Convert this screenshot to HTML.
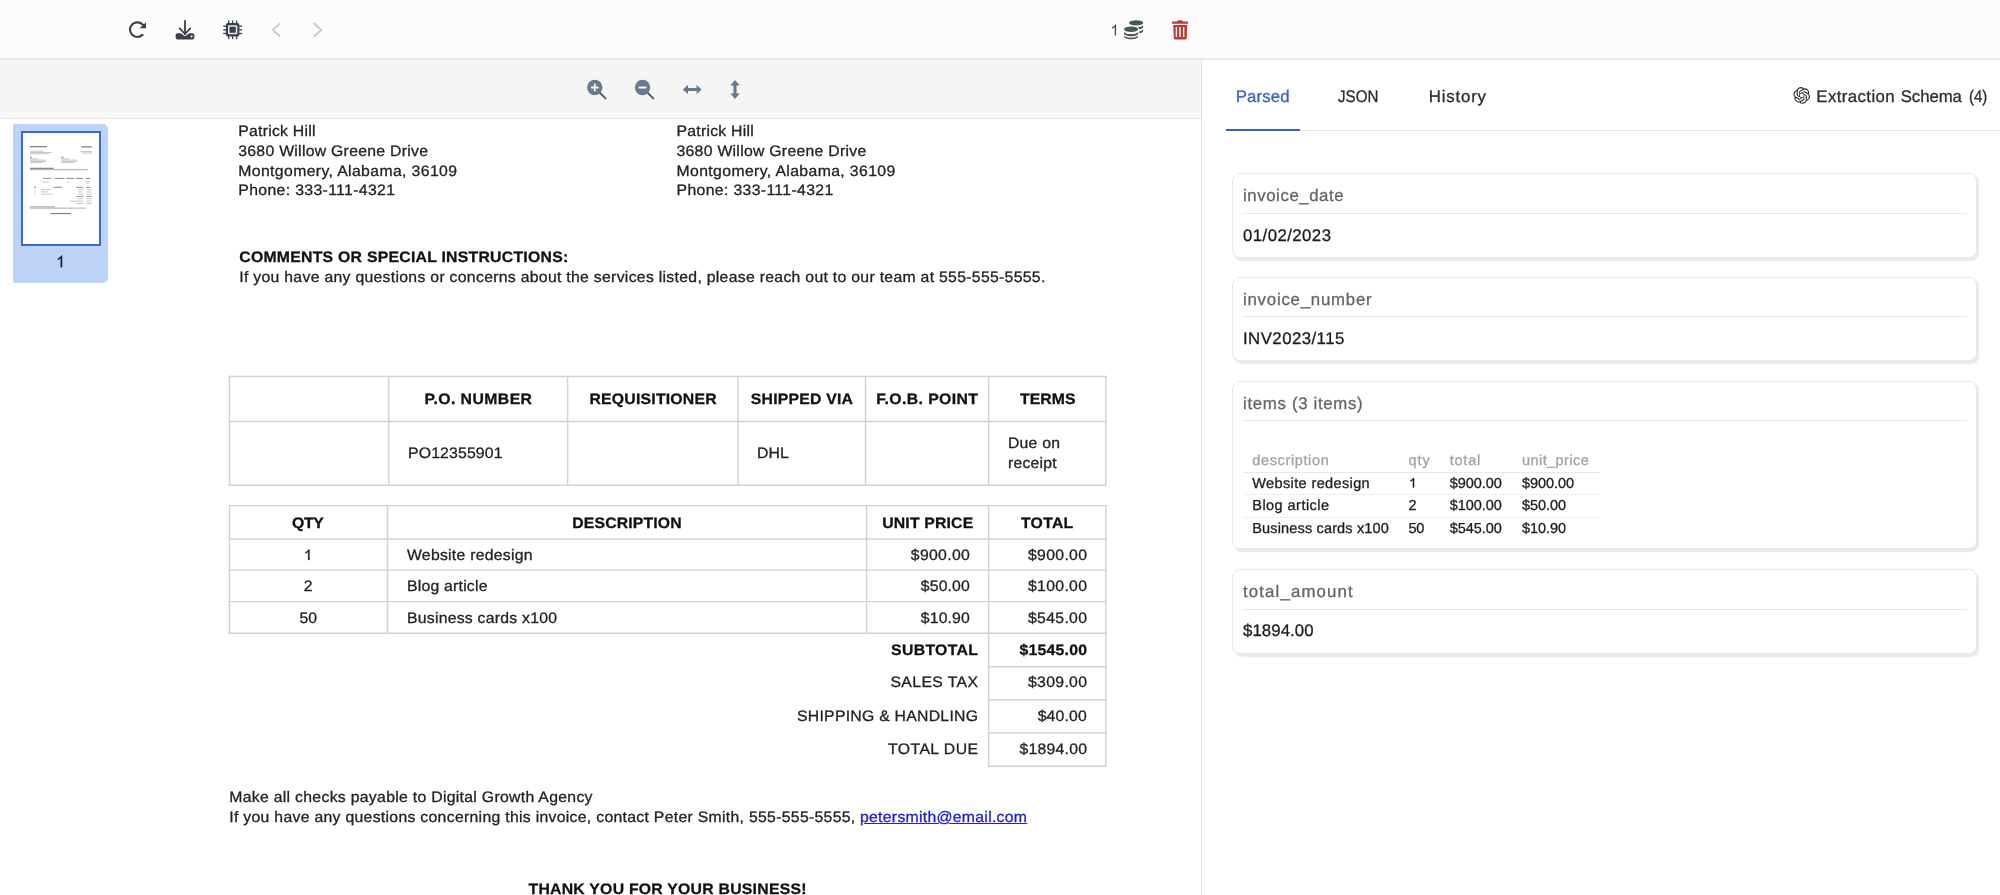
<!DOCTYPE html>
<html><head><meta charset="utf-8"><title>Document Parser</title>
<style>
html,body{margin:0;padding:0;}
body{width:2000px;height:895px;overflow:hidden;position:relative;background:#fff;font-family:"Liberation Sans",sans-serif;}
.t{-webkit-text-stroke:0.3px;text-rendering:geometricPrecision;position:absolute;white-space:pre;line-height:20px;height:20px;font-family:"Liberation Sans",sans-serif;}
.b{position:absolute;box-sizing:border-box;}
svg{position:absolute;overflow:visible;}
.card{position:absolute;box-sizing:border-box;background:#fff;border:1px solid #e9e9e9;border-radius:8px;box-shadow:2px 2.5px 1px rgba(0,0,0,0.085);}
.hl{position:absolute;height:1px;background:#e4e4e4;}
.vl{position:absolute;width:1px;background:#ccc;}
.tl{position:absolute;background:#cfcfcf;}
#txt{position:absolute;left:0;top:0;width:2000px;height:895px;will-change:transform;}

</style></head>
<body>
<!-- top bar -->
<div class="b" style="left:0;top:0;width:2000px;height:60px;background:#fcfcfc;border-bottom:2px solid #ebebeb;"></div>
<!-- grey viewer toolbar -->
<div class="b" style="left:0;top:60px;width:1201px;height:59px;background:#f5f5f5;border-bottom:1px solid #e3e3e3;"></div>
<div class="b" style="left:0;top:113px;width:1201px;height:5px;background:#f8f8f8;"></div>
<!-- right panel divider -->
<div class="b" style="left:1201px;top:60px;width:1px;height:835px;background:#e2e2e2;"></div>
<!-- thumbnail -->
<div class="b" style="left:13px;top:124px;width:95px;height:158.5px;background:#bdd3f8;border-radius:2px 5px 5px 2px;"></div>
<div class="b" style="left:20.5px;top:131px;width:80.5px;height:114.5px;background:#fff;border:2px solid #3668d6;"></div>
<!-- tabs -->
<div class="hl" style="left:1226px;top:130px;width:774px;background:#e6e6e6;"></div>
<div class="b" style="left:1226px;top:128.5px;width:74px;height:2.5px;background:#3b5fc4;"></div>
<!-- cards -->
<div class="card" style="left:1232px;top:173px;width:745px;height:84.5px;"></div>
<div class="hl" style="left:1241.5px;top:212.5px;width:725px;height:1.5px;background:#e8e8e8;"></div>
<div class="card" style="left:1232px;top:277px;width:745px;height:84px;"></div>
<div class="hl" style="left:1241.5px;top:315.5px;width:725px;height:1.5px;background:#e8e8e8;"></div>
<div class="card" style="left:1232px;top:381px;width:745px;height:168px;"></div>
<div class="hl" style="left:1241.5px;top:419.5px;width:725px;height:1.5px;background:#e8e8e8;"></div>
<div class="card" style="left:1232px;top:569px;width:745px;height:84.5px;"></div>
<div class="hl" style="left:1241.5px;top:608.5px;width:725px;height:1.5px;background:#e8e8e8;"></div>
<!-- items table rules -->
<div class="hl" style="left:1243px;top:471.5px;width:357px;background:#e9e9e9;"></div>
<div class="hl" style="left:1243px;top:494px;width:357px;background:#efefef;"></div>
<div class="hl" style="left:1243px;top:517px;width:357px;background:#efefef;"></div>
<!-- document table rules -->
<svg style="left:0;top:0;" width="2000" height="895" viewBox="0 0 2000 895"><g fill="none" stroke="#d2d2d2" stroke-width="1.45" stroke-linecap="square">
<path d="M229.50 376.40H1105.80"/>
<path d="M229.50 421.40H1105.80"/>
<path d="M229.50 485.30H1105.80"/>
<path d="M229.50 376.40V485.30"/>
<path d="M388.75 376.40V485.30"/>
<path d="M567.60 376.40V485.30"/>
<path d="M738.00 376.40V485.30"/>
<path d="M865.50 376.40V485.30"/>
<path d="M988.60 376.40V485.30"/>
<path d="M1105.80 376.40V485.30"/>
<path d="M229.50 505.60H1105.80"/>
<path d="M229.50 539.00H1105.80"/>
<path d="M229.50 570.10H1105.80"/>
<path d="M229.50 601.60H1105.80"/>
<path d="M229.50 633.30H1105.80"/>
<path d="M988.60 666.70H1105.80"/>
<path d="M988.60 699.70H1105.80"/>
<path d="M988.60 732.90H1105.80"/>
<path d="M988.60 766.20H1105.80"/>
<path d="M229.50 505.60V633.30"/>
<path d="M387.60 505.60V633.30"/>
<path d="M866.60 505.60V633.30"/>
<path d="M988.60 505.60V766.20"/>
<path d="M1105.80 505.60V766.20"/>
</g></svg>
<!-- icon layer: page-coordinate SVG -->
<svg style="left:0;top:0;" width="2000" height="895" viewBox="0 0 2000 895">
<!-- refresh -->
<g fill="none" stroke="#3b404a" stroke-width="2.2" stroke-linecap="round">
<path d="M143.2 25.2 A7.35 7.35 0 1 0 142.5 34.9"/>
</g>
<path d="M146 22.2 L146 28.3 L139.6 28.3 Z" fill="#3b404a"/>
<!-- download -->
<g fill="none" stroke="#3b404a" stroke-width="1.8" stroke-linecap="round" stroke-linejoin="round">
<path d="M185 20.8 V34"/><path d="M179.7 28.4 L185 34 L190.3 28.4"/>
</g>
<path d="M177.6 33.3 H180.4 C182 33.3 183.2 36 185 36 C186.8 36 188 33.3 189.6 33.3 H192.4 A2 2 0 0 1 194.4 35.3 V37.4 A2 2 0 0 1 192.4 39.4 H177.6 A2 2 0 0 1 175.6 37.4 V35.3 A2 2 0 0 1 177.6 33.3 Z" fill="#3b404a"/>
<circle cx="191.6" cy="36.5" r="1" fill="#fcfcfc"/>
<!-- chip -->
<g fill="#3b404a">
<rect x="225.9" y="23.1" width="13.5" height="13.3" rx="2"/>
<rect x="228.05" y="20.4" width="1.3" height="3"/><rect x="231.95" y="20.4" width="1.3" height="3"/><rect x="235.95" y="20.4" width="1.3" height="3"/>
<rect x="228.05" y="36.1" width="1.3" height="3"/><rect x="231.95" y="36.1" width="1.3" height="3"/><rect x="235.95" y="36.1" width="1.3" height="3"/>
<rect x="223.2" y="25.55" width="3" height="1.3"/><rect x="223.2" y="29.15" width="3" height="1.3"/><rect x="223.2" y="32.85" width="3" height="1.3"/>
<rect x="239.1" y="25.55" width="3" height="1.3"/><rect x="239.1" y="29.15" width="3" height="1.3"/><rect x="239.1" y="32.85" width="3" height="1.3"/>
</g>
<rect x="228" y="25.2" width="9.3" height="9.1" rx="1" fill="#e4e8f0"/>
<rect x="229.5" y="26.7" width="6.3" height="6.1" rx="0.4" fill="#3b404a"/>
<!-- chevrons -->
<g fill="none" stroke="#c7c7c7" stroke-width="1.7" stroke-linecap="round" stroke-linejoin="round">
<path d="M279.7 23.5 L272.9 29.8 L279.7 36.2"/>
<path d="M314.3 23.5 L321.3 29.8 L314.3 36.2"/>
</g>
<!-- coins -->
<g fill="#4a585c">
<ellipse cx="1136.1" cy="22.9" rx="7.1" ry="2.65"/>
<path d="M1143.2 25.2 V27 C1143.2 28 1141.6 28.9 1139.3 29.4 C1139.1 28.5 1138.6 27.9 1137.8 27.3 C1140.4 26.9 1142.3 26.2 1143.2 25.2 Z"/>
<path d="M1143.2 29.2 V31 C1143.2 32 1141.7 32.9 1139.4 33.4 V31.3 C1141.2 30.8 1142.6 30.1 1143.2 29.2 Z"/>
<ellipse cx="1131.1" cy="29.3" rx="7.1" ry="2.8"/>
<path d="M1124 31.9 C1125.5 33.4 1128.2 34.1 1131.1 34.1 C1134 34.1 1136.7 33.4 1138.2 31.9 V33.6 C1138.2 35.1 1135 36.3 1131.1 36.3 C1127.2 36.3 1124 35.1 1124 33.6 Z"/>
<path d="M1124 35.7 C1125.5 37 1128.2 37.7 1131.1 37.7 C1134 37.7 1136.7 37 1138.2 35.7 V36.6 C1138.2 38.1 1135 39.3 1131.1 39.3 C1127.2 39.3 1124 38.1 1124 36.6 Z"/>
</g>
<!-- trash -->
<g fill="#bb3a31">
<path d="M1172.6 21.4 H1177 L1177.7 20.5 Q1178 20.2 1178.5 20.2 H1181.5 Q1182 20.2 1182.3 20.5 L1183 21.4 H1187.4 Q1188 21.4 1188 22 V23.2 Q1188 23.8 1187.4 23.8 H1172.6 Q1172 23.8 1172 23.2 V22 Q1172 21.4 1172.6 21.4 Z"/>
<path d="M1173.3 25 H1187.2 L1186.7 37.9 Q1186.6 39.4 1185.1 39.4 H1175.4 Q1173.9 39.4 1173.8 37.9 Z"/>
</g>
<g fill="#fcfcfc">
<rect x="1175.7" y="27" width="1.35" height="10" rx="0.5"/><rect x="1179.35" y="27" width="1.35" height="10" rx="0.5"/><rect x="1183" y="27" width="1.35" height="10" rx="0.5"/>
</g>
<!-- zoom in -->
<g stroke="#4f5862" stroke-width="1.9" stroke-linecap="round"><path d="M599.5 92.5 L605.5 98.4"/><path d="M647.3 92.5 L653.3 98.4"/></g>
<circle cx="594.75" cy="87.5" r="7.7" fill="#677a8c"/>
<circle cx="642.55" cy="87.5" r="7.7" fill="#677a8c"/>
<g fill="#f2f6fa">
<rect x="590.8" y="86.6" width="7.9" height="1.8" rx="0.4"/><rect x="593.85" y="83.55" width="1.8" height="7.9" rx="0.4"/>
<rect x="638.6" y="86.6" width="7.9" height="1.8" rx="0.4"/>
</g>
<!-- fit width / fit height arrows -->
<g fill="#677a8c">
<path d="M682.8 89.55 L688 84.8 V88 H696.55 V84.8 L701.6 89.55 L696.55 94.3 V91.1 H688 V94.3 Z"/>
<path d="M735.03 80.1 L739.8 85.5 H736.6 V93.6 H739.8 L735.03 99 L730.3 93.6 H733.45 V85.5 H730.3 Z"/>
</g>
<!-- openai mark -->
<g transform="translate(1793.4 87.1) scale(0.695)" fill="#2b2b2b">
<path d="M22.2819 9.8211a5.9847 5.9847 0 0 0-.5157-4.9108 6.0462 6.0462 0 0 0-6.5098-2.9A6.0651 6.0651 0 0 0 4.9807 4.1818a5.9847 5.9847 0 0 0-3.9977 2.9 6.0462 6.0462 0 0 0 .7427 7.0966 5.98 5.98 0 0 0 .511 4.9107 6.051 6.051 0 0 0 6.5146 2.9001A5.9847 5.9847 0 0 0 13.2599 24a6.0557 6.0557 0 0 0 5.7718-4.2058 5.9894 5.9894 0 0 0 3.9977-2.9001 6.0557 6.0557 0 0 0-.7475-7.0729zm-9.022 12.6081a4.4755 4.4755 0 0 1-2.8764-1.0408l.1419-.0804 4.7783-2.7582a.7948.7948 0 0 0 .3927-.6813v-6.7369l2.02 1.1686a.071.071 0 0 1 .038.052v5.5826a4.504 4.504 0 0 1-4.4945 4.4944zm-9.6607-4.1254a4.4708 4.4708 0 0 1-.5346-3.0137l.142.0852 4.783 2.7582a.7712.7712 0 0 0 .7806 0l5.8428-3.3685v2.3324a.0804.0804 0 0 1-.0332.0615L9.74 19.9502a4.4992 4.4992 0 0 1-6.1408-1.6464zM2.3408 7.8956a4.485 4.485 0 0 1 2.3655-1.9728V11.6a.7664.7664 0 0 0 .3879.6765l5.8144 3.3543-2.0201 1.1685a.0757.0757 0 0 1-.071 0l-4.8303-2.7865A4.504 4.504 0 0 1 2.3408 7.872zm16.5963 3.8558L13.1038 8.364 15.1192 7.2a.0757.0757 0 0 1 .071 0l4.8303 2.7913a4.4944 4.4944 0 0 1-.6765 8.1042v-5.6772a.79.79 0 0 0-.407-.667zm2.0107-3.0231l-.142-.0852-4.7735-2.7818a.7759.7759 0 0 0-.7854 0L9.409 9.2297V6.8974a.0662.0662 0 0 1 .0284-.0615l4.8303-2.7866a4.4992 4.4992 0 0 1 6.6802 4.66zM8.3065 12.863l-2.02-1.1638a.0804.0804 0 0 1-.038-.0567V6.0742a4.4992 4.4992 0 0 1 7.3757-3.4537l-.142.0805L8.704 5.459a.7948.7948 0 0 0-.3927.6813zm1.0976-2.3654l2.602-1.4998 2.6069 1.4998v2.9994l-2.5974 1.4997-2.6067-1.4997Z"/>
</g>
<!-- standalone digit 1 glyphs -->
<g transform="translate(303.80 560.00) scale(0.007500 -0.007143)"><path d="M763 0H583V1147Q518 1085 412.5 1023T223 930V1104Q373 1174.5 485 1275T644 1470H763Z" fill="#222" stroke="#222" stroke-width="42"/></g>
<g transform="translate(56.13 267.20) scale(0.007823 -0.007823)"><path d="M763 0H583V1147Q518 1085 412.5 1023T223 930V1104Q373 1174.5 485 1275T644 1470H763Z" fill="#1c2233" stroke="#1c2233" stroke-width="38"/></g>
<g transform="translate(1110.39 35.60) scale(0.007483 -0.007483)"><path d="M763 0H583V1147Q518 1085 412.5 1023T223 930V1104Q373 1174.5 485 1275T644 1470H763Z" fill="#4a4a4a"/></g>
<g transform="translate(1408.87 487.60) scale(0.006857 -0.006531)"><path d="M763 0H583V1147Q518 1085 412.5 1023T223 930V1104Q373 1174.5 485 1275T644 1470H763Z" fill="#1c1c1c" stroke="#1c1c1c" stroke-width="38"/></g>
</svg>
<!-- thumbnail page content -->
<svg style="left:0;top:0;" width="2000" height="895" viewBox="0 0 2000 895"><g opacity="0.85">
<rect x="30.0" y="146.15" width="16.9" height="1.1" fill="#555"/>
<rect x="81.1" y="146.35" width="10.5" height="1.1" fill="#555"/>
<rect x="30.0" y="150.75" width="13.2" height="0.9" fill="#b4b4b4"/>
<rect x="30.0" y="152.05" width="21.8" height="0.9" fill="#b4b4b4"/>
<rect x="30.0" y="153.35" width="19.0" height="0.9" fill="#b4b4b4"/>
<rect x="80.3" y="151.15" width="11.7" height="0.9" fill="#b4b4b4"/>
<rect x="82.0" y="152.55" width="10.0" height="0.9" fill="#b4b4b4"/>
<rect x="30.0" y="156.85" width="1.8" height="0.9" fill="#555"/>
<rect x="61.3" y="156.85" width="2.2" height="0.9" fill="#555"/>
<rect x="30.0" y="158.35" width="8.0" height="0.9" fill="#b4b4b4"/>
<rect x="61.3" y="158.35" width="8.0" height="0.9" fill="#b4b4b4"/>
<rect x="30.0" y="159.65" width="15.5" height="0.9" fill="#b4b4b4"/>
<rect x="61.3" y="159.65" width="15.5" height="0.9" fill="#b4b4b4"/>
<rect x="30.0" y="160.95" width="16.5" height="0.9" fill="#b4b4b4"/>
<rect x="61.3" y="160.95" width="16.5" height="0.9" fill="#b4b4b4"/>
<rect x="30.0" y="162.25" width="12.5" height="0.9" fill="#b4b4b4"/>
<rect x="61.3" y="162.25" width="12.5" height="0.9" fill="#b4b4b4"/>
<rect x="30.0" y="167.80" width="23.7" height="1.0" fill="#555"/>
<rect x="30.0" y="169.25" width="57.8" height="0.9" fill="#8c8c8c"/>
<rect x="43.2" y="177.90" width="7.8" height="1.0" fill="#777"/>
<rect x="54.8" y="177.90" width="9.5" height="1.0" fill="#777"/>
<rect x="66.4" y="177.90" width="7.5" height="1.0" fill="#777"/>
<rect x="75.9" y="177.90" width="7.2" height="1.0" fill="#777"/>
<rect x="85.9" y="177.90" width="4.1" height="1.0" fill="#777"/>
<rect x="42.5" y="181.75" width="6.5" height="0.9" fill="#b4b4b4"/>
<rect x="67.3" y="181.75" width="2.2" height="0.9" fill="#b4b4b4"/>
<rect x="85.9" y="181.15" width="3.4" height="0.9" fill="#b4b4b4"/>
<rect x="85.9" y="182.55" width="3.1" height="0.9" fill="#b4b4b4"/>
<rect x="33.7" y="186.80" width="2.3" height="1.0" fill="#777"/>
<rect x="53.7" y="186.80" width="8.2" height="1.0" fill="#777"/>
<rect x="76.3" y="186.80" width="6.8" height="1.0" fill="#777"/>
<rect x="86.1" y="186.80" width="4.1" height="1.0" fill="#777"/>
<rect x="34.6" y="189.25" width="1.2" height="0.9" fill="#b4b4b4"/>
<rect x="40.9" y="189.25" width="9.8" height="0.9" fill="#b4b4b4"/>
<rect x="78.6" y="189.25" width="4.1" height="0.9" fill="#b4b4b4"/>
<rect x="86.8" y="189.25" width="4.8" height="0.9" fill="#b4b4b4"/>
<rect x="34.6" y="191.45" width="1.2" height="0.9" fill="#b4b4b4"/>
<rect x="40.9" y="191.45" width="7.4" height="0.9" fill="#b4b4b4"/>
<rect x="78.6" y="191.45" width="4.1" height="0.9" fill="#b4b4b4"/>
<rect x="86.8" y="191.45" width="4.8" height="0.9" fill="#b4b4b4"/>
<rect x="34.6" y="193.75" width="1.2" height="0.9" fill="#b4b4b4"/>
<rect x="40.9" y="193.75" width="12.3" height="0.9" fill="#b4b4b4"/>
<rect x="78.6" y="193.75" width="4.1" height="0.9" fill="#b4b4b4"/>
<rect x="86.8" y="193.75" width="4.8" height="0.9" fill="#b4b4b4"/>
<rect x="76.3" y="195.95" width="7.1" height="0.9" fill="#777"/>
<rect x="86.3" y="195.95" width="5.3" height="0.9" fill="#777"/>
<rect x="77.2" y="198.25" width="6.2" height="0.9" fill="#b4b4b4"/>
<rect x="86.3" y="198.25" width="5.3" height="0.9" fill="#b4b4b4"/>
<rect x="69.8" y="200.65" width="13.6" height="0.9" fill="#b4b4b4"/>
<rect x="86.3" y="200.65" width="5.3" height="0.9" fill="#b4b4b4"/>
<rect x="76.3" y="202.95" width="7.1" height="0.9" fill="#b4b4b4"/>
<rect x="86.3" y="202.95" width="5.3" height="0.9" fill="#b4b4b4"/>
<rect x="29.6" y="206.35" width="25.5" height="0.9" fill="#8c8c8c"/>
<rect x="29.6" y="207.65" width="42.9" height="0.9" fill="#8c8c8c"/>
<rect x="72.5" y="207.65" width="13.6" height="0.9" fill="#8f9be0"/>
<rect x="50.4" y="213.10" width="20.5" height="1.0" fill="#555"/>
</g></svg>

<div id="txt">
<span class="t" style="left:238.25px;top:121.78px;font-size:15.8px;color:#222;letter-spacing:0.24px;transform:scale(1.0000,0.9600);transform-origin:0 15.47px;">Patrick Hill</span>
<span class="t" style="left:238.25px;top:141.78px;font-size:15.8px;color:#222;letter-spacing:0.272px;transform:scale(1.0000,0.9600);transform-origin:0 15.47px;">3680 Willow Greene Drive</span>
<span class="t" style="left:238.25px;top:161.53px;font-size:15.8px;color:#222;letter-spacing:0.366px;transform:scale(1.0000,0.9600);transform-origin:0 15.47px;">Montgomery, Alabama, 36109</span>
<span class="t" style="left:238.25px;top:181.28px;font-size:15.8px;color:#222;letter-spacing:0.347px;transform:scale(1.0000,0.9600);transform-origin:0 15.47px;">Phone: 333-111-4321</span>
<span class="t" style="left:676.50px;top:121.78px;font-size:15.8px;color:#222;letter-spacing:0.24px;transform:scale(1.0000,0.9600);transform-origin:0 15.47px;">Patrick Hill</span>
<span class="t" style="left:676.50px;top:141.78px;font-size:15.8px;color:#222;letter-spacing:0.272px;transform:scale(1.0000,0.9600);transform-origin:0 15.47px;">3680 Willow Greene Drive</span>
<span class="t" style="left:676.50px;top:161.53px;font-size:15.8px;color:#222;letter-spacing:0.366px;transform:scale(1.0000,0.9600);transform-origin:0 15.47px;">Montgomery, Alabama, 36109</span>
<span class="t" style="left:676.50px;top:181.28px;font-size:15.8px;color:#222;letter-spacing:0.347px;transform:scale(1.0000,0.9600);transform-origin:0 15.47px;">Phone: 333-111-4321</span>
<span class="t" style="left:239.25px;top:248.03px;font-size:15.8px;color:#111;font-weight:700;letter-spacing:0.252px;transform:scale(1.0000,0.9600);transform-origin:0 15.47px;">COMMENTS OR SPECIAL INSTRUCTIONS:</span>
<span class="t" style="left:239.25px;top:268.03px;font-size:15.8px;color:#222;letter-spacing:0.289px;transform:scale(1.0000,0.9600);transform-origin:0 15.47px;">If you have any questions or concerns about the services listed, please reach out to our team at 555-555-5555.</span>
<span class="t" style="left:424.50px;top:390.03px;font-size:15.8px;color:#111;font-weight:700;letter-spacing:0.422px;transform:scale(1.0000,0.9600);transform-origin:0 15.47px;">P.O. NUMBER</span>
<span class="t" style="left:589.50px;top:390.03px;font-size:15.8px;color:#111;font-weight:700;letter-spacing:0.205px;transform:scale(1.0000,0.9600);transform-origin:0 15.47px;">REQUISITIONER</span>
<span class="t" style="left:750.75px;top:390.03px;font-size:15.8px;color:#111;font-weight:700;letter-spacing:0.217px;transform:scale(1.0000,0.9600);transform-origin:0 15.47px;">SHIPPED VIA</span>
<span class="t" style="left:876.25px;top:390.03px;font-size:15.8px;color:#111;font-weight:700;letter-spacing:0.393px;transform:scale(1.0000,0.9600);transform-origin:0 15.47px;">F.O.B. POINT</span>
<span class="t" style="left:1020.00px;top:390.03px;font-size:15.8px;color:#111;font-weight:700;letter-spacing:0.051px;transform:scale(1.0000,0.9600);transform-origin:0 15.47px;">TERMS</span>
<span class="t" style="left:408.00px;top:443.53px;font-size:15.8px;color:#222;letter-spacing:0.155px;transform:scale(1.0000,0.9600);transform-origin:0 15.47px;">PO12355901</span>
<span class="t" style="left:757.00px;top:443.53px;font-size:15.8px;color:#222;letter-spacing:0.07px;transform:scale(1.0000,0.9600);transform-origin:0 15.47px;">DHL</span>
<span class="t" style="left:1008.00px;top:434.03px;font-size:15.8px;color:#222;letter-spacing:0.209px;transform:scale(1.0000,0.9600);transform-origin:0 15.47px;">Due on</span>
<span class="t" style="left:1008.00px;top:454.03px;font-size:15.8px;color:#222;letter-spacing:0.221px;transform:scale(1.0000,0.9600);transform-origin:0 15.47px;">receipt</span>
<span class="t" style="left:292.00px;top:513.93px;font-size:15.8px;color:#111;font-weight:700;letter-spacing:-0.367px;transform:scale(1.0000,0.9600);transform-origin:0 15.47px;">QTY</span>
<span class="t" style="left:572.20px;top:513.93px;font-size:15.8px;color:#111;font-weight:700;letter-spacing:0.153px;transform:scale(1.0000,0.9600);transform-origin:0 15.47px;">DESCRIPTION</span>
<span class="t" style="left:882.20px;top:513.93px;font-size:15.8px;color:#111;font-weight:700;letter-spacing:0.163px;transform:scale(1.0000,0.9600);transform-origin:0 15.47px;">UNIT PRICE</span>
<span class="t" style="left:1021.00px;top:513.93px;font-size:15.8px;color:#111;font-weight:700;letter-spacing:0.253px;transform:scale(1.0000,0.9600);transform-origin:0 15.47px;">TOTAL</span>
<span class="t" style="left:407.00px;top:545.73px;font-size:15.8px;color:#222;letter-spacing:0.249px;transform:scale(1.0000,0.9600);transform-origin:0 15.47px;">Website redesign</span>
<span class="t" style="left:910.80px;top:545.73px;font-size:15.8px;color:#222;letter-spacing:0.315px;transform:scale(1.0000,0.9600);transform-origin:0 15.47px;">$900.00</span>
<span class="t" style="left:1028.00px;top:545.73px;font-size:15.8px;color:#222;letter-spacing:0.315px;transform:scale(1.0000,0.9600);transform-origin:0 15.47px;">$900.00</span>
<span class="t" style="left:303.80px;top:576.93px;font-size:15.8px;color:#222;transform:scale(1.0000,0.9600);transform-origin:0 15.47px;">2</span>
<span class="t" style="left:407.00px;top:576.93px;font-size:15.8px;color:#222;letter-spacing:0.213px;transform:scale(1.0000,0.9600);transform-origin:0 15.47px;">Blog article</span>
<span class="t" style="left:920.80px;top:576.93px;font-size:15.8px;color:#222;letter-spacing:0.134px;transform:scale(1.0000,0.9600);transform-origin:0 15.47px;">$50.00</span>
<span class="t" style="left:1028.00px;top:576.93px;font-size:15.8px;color:#222;letter-spacing:0.315px;transform:scale(1.0000,0.9600);transform-origin:0 15.47px;">$100.00</span>
<span class="t" style="left:299.41px;top:608.53px;font-size:15.8px;color:#222;transform:scale(1.0000,0.9600);transform-origin:0 15.47px;">50</span>
<span class="t" style="left:407.00px;top:608.53px;font-size:15.8px;color:#222;letter-spacing:0.235px;transform:scale(1.0000,0.9600);transform-origin:0 15.47px;">Business cards x100</span>
<span class="t" style="left:920.80px;top:608.53px;font-size:15.8px;color:#222;letter-spacing:0.134px;transform:scale(1.0000,0.9600);transform-origin:0 15.47px;">$10.90</span>
<span class="t" style="left:1028.00px;top:608.53px;font-size:15.8px;color:#222;letter-spacing:0.315px;transform:scale(1.0000,0.9600);transform-origin:0 15.47px;">$545.00</span>
<span class="t" style="left:891.00px;top:641.43px;font-size:15.8px;color:#111;font-weight:700;letter-spacing:0.35px;transform:scale(1.0000,0.9600);transform-origin:0 15.47px;">SUBTOTAL</span>
<span class="t" style="left:1019.40px;top:641.43px;font-size:15.8px;color:#111;font-weight:700;letter-spacing:0.244px;transform:scale(1.0000,0.9600);transform-origin:0 15.47px;">$1545.00</span>
<span class="t" style="left:890.40px;top:673.23px;font-size:15.8px;color:#222;letter-spacing:0.376px;transform:scale(1.0000,0.9600);transform-origin:0 15.47px;">SALES TAX</span>
<span class="t" style="left:1028.00px;top:673.23px;font-size:15.8px;color:#222;letter-spacing:0.315px;transform:scale(1.0000,0.9600);transform-origin:0 15.47px;">$309.00</span>
<span class="t" style="left:797.01px;top:706.53px;font-size:15.8px;color:#222;letter-spacing:0.253px;transform:scale(1.0000,0.9600);transform-origin:0 15.47px;">SHIPPING &amp; HANDLING</span>
<span class="t" style="left:1037.70px;top:706.53px;font-size:15.8px;color:#222;letter-spacing:0.134px;transform:scale(1.0000,0.9600);transform-origin:0 15.47px;">$40.00</span>
<span class="t" style="left:888.00px;top:740.03px;font-size:15.8px;color:#222;letter-spacing:0.424px;transform:scale(1.0000,0.9600);transform-origin:0 15.47px;">TOTAL DUE</span>
<span class="t" style="left:1019.40px;top:740.03px;font-size:15.8px;color:#222;letter-spacing:0.244px;transform:scale(1.0000,0.9600);transform-origin:0 15.47px;">$1894.00</span>
<span class="t" style="left:229.25px;top:787.53px;font-size:15.8px;color:#222;letter-spacing:0.293px;transform:scale(1.0000,0.9600);transform-origin:0 15.47px;">Make all checks payable to Digital Growth Agency</span>
<span class="t" style="left:229.25px;top:807.83px;font-size:15.8px;color:#222;letter-spacing:0.291px;transform:scale(1.0000,0.9600);transform-origin:0 15.47px;">If you have any questions concerning this invoice, contact Peter Smith, 555-555-5555,</span>
<span class="t" style="left:860.00px;top:807.83px;font-size:15.8px;color:#1a1ad8;letter-spacing:0.275px;transform:scale(1.0000,0.9600);transform-origin:0 15.47px;text-decoration:underline;">petersmith@email.com</span>
<span class="t" style="left:528.50px;top:879.83px;font-size:15.8px;color:#111;font-weight:700;letter-spacing:0.24px;transform:scale(1.0000,0.9600);transform-origin:0 15.47px;">THANK YOU FOR YOUR BUSINESS!</span>
<span class="t" style="left:1235.80px;top:87.38px;font-size:16.8px;color:#3b5fc4;letter-spacing:0.126px;">Parsed</span>
<span class="t" style="left:1337.90px;top:87.38px;font-size:16.8px;color:#2b2b2b;transform:scale(0.9002,1.0000);transform-origin:0 15.82px;">JSON</span>
<span class="t" style="left:1428.80px;top:87.38px;font-size:16.8px;color:#2b2b2b;letter-spacing:0.83px;">History</span>
<span class="t" style="left:1816.30px;top:87.38px;font-size:16.8px;color:#2b2b2b;letter-spacing:0.419px;">Extraction</span>
<span class="t" style="left:1900.70px;top:87.38px;font-size:16.8px;color:#2b2b2b;letter-spacing:-0.072px;">Schema</span>
<span class="t" style="left:1968.80px;top:87.38px;font-size:16.8px;color:#2b2b2b;transform:scale(0.8920,1.0000);transform-origin:0 15.82px;">(4)</span>
<span class="t" style="left:1243.00px;top:185.68px;font-size:16.8px;color:#62656b;letter-spacing:0.579px;">invoice_date</span>
<span class="t" style="left:1243.00px;top:226.28px;font-size:16.8px;color:#1c1c1c;letter-spacing:0.444px;">01/02/2023</span>
<span class="t" style="left:1243.00px;top:290.18px;font-size:16.8px;color:#62656b;letter-spacing:0.779px;">invoice_number</span>
<span class="t" style="left:1243.00px;top:328.98px;font-size:16.8px;color:#1c1c1c;letter-spacing:0.457px;">INV2023/115</span>
<span class="t" style="left:1243.00px;top:394.48px;font-size:16.8px;color:#62656b;letter-spacing:0.691px;">items (3 items)</span>
<span class="t" style="left:1243.00px;top:581.88px;font-size:16.8px;color:#62656b;letter-spacing:1.143px;">total_amount</span>
<span class="t" style="left:1243.00px;top:620.88px;font-size:16.8px;color:#1c1c1c;letter-spacing:0.086px;">$1894.00</span>
<span class="t" style="left:1252.30px;top:450.98px;font-size:14.5px;color:#a0a3aa;letter-spacing:0.628px;">description</span>
<span class="t" style="left:1408.50px;top:450.98px;font-size:14.5px;color:#a0a3aa;letter-spacing:0.978px;">qty</span>
<span class="t" style="left:1449.70px;top:450.98px;font-size:14.5px;color:#a0a3aa;letter-spacing:0.795px;">total</span>
<span class="t" style="left:1522.00px;top:450.98px;font-size:14.5px;color:#a0a3aa;letter-spacing:0.436px;">unit_price</span>
<span class="t" style="left:1252.30px;top:473.78px;font-size:14.5px;color:#1c1c1c;letter-spacing:0.375px;">Website redesign</span>
<span class="t" style="left:1449.70px;top:473.78px;font-size:14.5px;color:#1c1c1c;letter-spacing:-0.054px;">$900.00</span>
<span class="t" style="left:1522.00px;top:473.78px;font-size:14.5px;color:#1c1c1c;letter-spacing:-0.054px;">$900.00</span>
<span class="t" style="left:1252.30px;top:495.58px;font-size:14.5px;color:#1c1c1c;letter-spacing:0.451px;">Blog article</span>
<span class="t" style="left:1408.50px;top:495.58px;font-size:14.5px;color:#1c1c1c;">2</span>
<span class="t" style="left:1449.70px;top:495.58px;font-size:14.5px;color:#1c1c1c;letter-spacing:-0.054px;">$100.00</span>
<span class="t" style="left:1522.00px;top:495.58px;font-size:14.5px;color:#1c1c1c;letter-spacing:-0.072px;">$50.00</span>
<span class="t" style="left:1252.30px;top:519.48px;font-size:14.5px;color:#1c1c1c;letter-spacing:0.15px;">Business cards x100</span>
<span class="t" style="left:1408.50px;top:519.48px;font-size:14.5px;color:#1c1c1c;letter-spacing:-0.341px;">50</span>
<span class="t" style="left:1449.70px;top:519.48px;font-size:14.5px;color:#1c1c1c;letter-spacing:-0.054px;">$545.00</span>
<span class="t" style="left:1522.00px;top:519.48px;font-size:14.5px;color:#1c1c1c;letter-spacing:-0.072px;">$10.90</span>
</div>
</body></html>
